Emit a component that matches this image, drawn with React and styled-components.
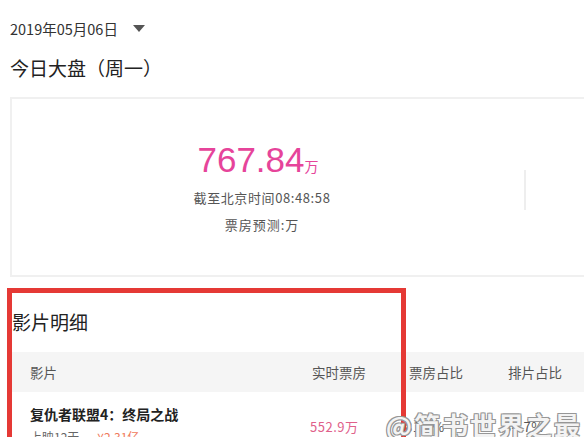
import React from 'react'
import styled, { createGlobalStyle } from 'styled-components'

const Global = createGlobalStyle`
body {
  margin: 0;
  background: #fff;
  font-family: "Noto Sans CJK SC", "Liberation Sans", sans-serif;
  color: #333;
  overflow: hidden;
}
`
const Page = styled.div`
position: relative;
width: 584px;
height: 437px;
overflow: hidden;
padding: 0 0 0 10px;
box-sizing: border-box;
`
const DateRow = styled.div`
display: flex;
align-items: center;
height: 20px;
margin-top: 18px;
font-size: 14.5px;
color: #333;
`
const Caret = styled.span`
width: 0;
height: 0;
margin-left: 15px;
border-left: 6px solid transparent;
border-right: 6px solid transparent;
border-top: 7px solid #555;
`
const Title = styled.div`
font-size: 19px;
line-height: 26px;
margin-top: 17px;
color: #222;
`
const Card = styled.div`
display: flex;
align-items: center;
width: 620px;
height: 176px;
margin-top: 16px;
border: 2px solid #f0f0f0;
box-sizing: content-box;
`
const Stat = styled.div`
display: flex;
flex-direction: column;
align-items: center;
width: 500px;
`
const Big = styled.div`
font-family: "Liberation Sans", sans-serif;
font-size: 35px;
line-height: 40px;
color: #e6449a;
padding-right: 8px;
span {
  font-family: "Noto Sans CJK SC", sans-serif;
  font-size: 14px;
}
`
const Sub = styled.div`
font-size: 13px;
color: #555;
line-height: 18px;
letter-spacing: ${p => p.$ls}px;
margin-top: ${p => p.$gap}px;
`
const Divider = styled.div`
width: 2px;
height: 40px;
margin-left: 12px;
margin-top: 6px;
background: #eee;
`
const Section = styled.div`
font-size: 19px;
line-height: 26px;
margin-top: 32px;
padding-left: 2px;
color: #222;
`
const HeadRow = styled.div`
display: flex;
align-items: center;
height: 40px;
margin-top: 17px;
background: #f5f5f5;
font-size: 13.5px;
color: #555;
`
const Cell = styled.div`
width: ${p => p.$w}px;
padding-left: ${p => p.$pl || 0}px;
box-sizing: border-box;
flex-shrink: 0;
`
const Row = styled.div`
display: flex;
height: 60px;
`
const FilmCol = styled.div`
width: 302px;
padding-left: 20px;
padding-top: 12px;
box-sizing: border-box;
`
const FilmName = styled.div`
font-size: 14px;
font-weight: 700;
color: #222;
line-height: 20px;
`
const FilmMeta = styled.div`
font-size: 12px;
color: #666;
line-height: 18px;
margin-top: 4px;
span {
  color: #f07a5c;
  margin-left: 18px;
}
`
const Value = styled.div`
width: ${p => p.$w}px;
padding-top: 25px;
padding-left: ${p => p.$pl || 0}px;
box-sizing: border-box;
font-size: 13px;
letter-spacing: 0.5px;
color: ${p => p.$c || '#555'};
flex-shrink: 0;
`
const RedBox = styled.div`
position: absolute;
left: 7px;
top: 288px;
width: 389px;
height: 200px;
border: 5px solid #e53935;
border-bottom: none;
`
const Watermark = styled.div`
position: absolute;
right: 2px;
bottom: -6px;
font-size: 26px;
font-weight: 700;
letter-spacing: 2px;
color: rgba(255, 255, 255, 0.92);
text-shadow: 0 0 1px #888, 1px 1px 0 #999, -1px -1px 0 #999, 1px -1px 0 #999, -1px 1px 0 #999;
`

export default function App() {
  return (
    <>
      <Global />
      <Page>
        <DateRow>2019年05月06日<Caret /></DateRow>
        <Title>今日大盘（周一）</Title>
        <Card>
          <Stat>
            <Big>767.84<span>万</span></Big>
            <Sub $gap={3} $ls={0.6}>截至北京时间08:48:58</Sub>
            <Sub $gap={9} $ls={1}>票房预测:万</Sub>
          </Stat>
          <Divider />
        </Card>
        <Section>影片明细</Section>
        <HeadRow>
          <Cell $w={302} $pl={20}>影片</Cell>
          <Cell $w={97}>实时票房</Cell>
          <Cell $w={99}>票房占比</Cell>
          <Cell $w={80}>排片占比</Cell>
        </HeadRow>
        <Row>
          <FilmCol>
            <FilmName>复仇者联盟4：终局之战</FilmName>
            <FilmMeta>上映12天<span>¥2.31亿</span></FilmMeta>
          </FilmCol>
          <Value $w={97} $pl={2} $c="#e0608a">552.9万</Value>
          <Value $w={99}>81.6%</Value>
          <Value $w={80}>34.7%</Value>
        </Row>
        <RedBox />
        <Watermark>@简书世界之最</Watermark>
      </Page>
    </>
  )
}
